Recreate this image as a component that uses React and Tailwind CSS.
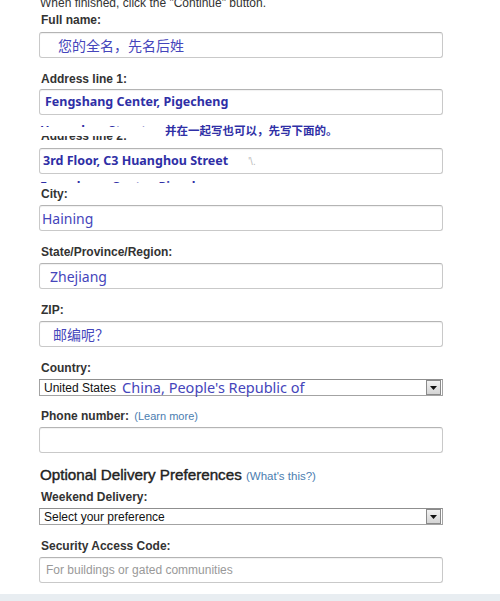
import React from "react";

const label = "block pl-[2px] text-[12px] leading-[14px] font-bold text-[#333]";
const box =
  "w-full h-[26px] border border-[#c9c9c9] border-t-[#b4b4b4] rounded-[3px] bg-white shadow-[inset_0_1px_1px_rgba(0,0,0,0.06)] flex items-center overflow-hidden";
const hand = "text-[#4545bb] [font-family:'Noto_Sans',sans-serif]";
const handBold = "text-[#2f2fa6] font-bold [font-family:'Noto_Sans',sans-serif]";
const cjk = "text-[#4545bb] [font-family:'Noto_Sans_CJK_SC',sans-serif]";
const link = "text-[#4b7db0] font-normal";

// ? Caja de seleccion con el boton gris de windows
const Select = ({ children }) => (
  <div className="w-full h-[17px] border border-[#a3a3a3] border-t-[#8f8f8f] bg-white flex items-center relative">
    <div className="flex-1 flex items-center pl-[4px] overflow-hidden whitespace-nowrap">{children}</div>
    <div className="w-[15px] h-[15px] border border-[#8a8a8a] bg-gradient-to-b from-[#f2f2f2] to-[#d4d4d4] flex items-center justify-center mr-[1px]">
      <svg width="7" height="4" viewBox="0 0 7 4">
        <path d="M0 0 L7 0 L3.5 4 Z" fill="#111" />
      </svg>
    </div>
  </div>
);

const App = () => {
  return (
    <div className="w-[500px] h-[601px] bg-white overflow-hidden [font-family:'Liberation_Sans',Arial,sans-serif] flex flex-col">
      <div className="pl-[39px] w-[443px]">
        {/* texto de arriba cortado */}
        <div className="h-[11px] overflow-hidden">
          <div className="pl-[1px] text-[12px] leading-[14px] -mt-[4px] text-[#333]">
            When finished, click the "Continue" button.
          </div>
        </div>

        <label className={label + " mt-[2px]"}>Full name:</label>
        <div className={box + " mt-[5px] pl-[18px]"}>
          <span className={cjk + " text-[14px]"}>您的全名，先名后姓</span>
        </div>

        <label className={label + " mt-[14px]"}>Address line 1:</label>
        <div className={box + " mt-[3px] pl-[5px] h-[25px]"}>
          <span className={handBold + " text-[12.5px]"}>Fengshang Center, Pigecheng</span>
        </div>

        {/* pedazo recortado con la nota */}
        <div className="h-[33px] relative overflow-hidden">
          <div className={label + " absolute left-0 top-[14px]"}>Address line 2:</div>
          <div className="absolute left-0 top-0 w-full h-[21px] bg-white" />
          <div className="absolute left-[1px] top-[8px] h-[4px] overflow-hidden">
            <span className={handBold + " text-[12.5px] leading-[16px] block"}>Huanghou Street</span>
          </div>
          <div className="absolute left-[126px] top-[7px] text-[#2f2fa6] font-bold text-[11.5px] leading-[16px] [font-family:'Noto_Sans_CJK_SC',sans-serif]">
            并在一起写也可以，先写下面的。
          </div>
        </div>

        <div className={box + " pl-[3px]"}>
          <span className={handBold + " text-[12.5px]"}>3rd Floor, C3 Huanghou Street</span>
          <span className="ml-[20px] text-[10px] text-[#bbb]">'\.</span>
        </div>

        <div className="h-[13px] relative overflow-hidden">
          <div className="absolute left-[1px] top-[5px] h-[4px] overflow-hidden">
            <span className={handBold + " text-[12.5px] leading-[16px] block"}>Fengshang Center, Pigecheng</span>
          </div>
        </div>

        <label className={label}>City:</label>
        <div className={box + " mt-[4px] pl-[2px]"}>
          <span className={hand + " text-[14px]"}>Haining</span>
        </div>

        <label className={label + " mt-[14px]"}>State/Province/Region:</label>
        <div className={box + " mt-[4px] pl-[10px]"}>
          <span className={hand + " text-[14px]"}>Zhejiang</span>
        </div>

        <label className={label + " mt-[14px]"}>ZIP:</label>
        <div className={box + " mt-[4px] pl-[13px]"}>
          <span className={cjk + " text-[14px]"}>邮编呢？</span>
        </div>

        <label className={label + " mt-[14px]"}>Country:</label>
        <div className="mt-[4px]">
          <Select>
            <span className="text-[12px] text-[#111]">United States</span>
            <span className={hand + " text-[14.5px] ml-[6px] leading-[15px]"}>China, People's Republic of</span>
          </Select>
        </div>

        <label className={label + " mt-[13px]"}>
          Phone number: <span className={link + " text-[11px] ml-[2px]"}>(Learn more)</span>
        </label>
        <div className={box + " mt-[4px]"} />

        <h2 className="mt-[12px] pl-[1px] text-[15.2px] leading-[20px] font-normal text-[#222] [-webkit-text-stroke:0.4px_#222]">
          Optional Delivery Preferences{" "}
          <span className={link + " text-[11.5px] [-webkit-text-stroke:0]"}>(What's this?)</span>
        </h2>

        <label className={label + " mt-[4px]"}>Weekend Delivery:</label>
        <div className="mt-[4px]">
          <Select>
            <span className="text-[12px] text-[#111]">Select your preference</span>
          </Select>
        </div>

        <label className={label + " mt-[14px]"}>Security Access Code:</label>
        <div className={box + " mt-[4px] pl-[6px]"}>
          <span className="text-[12px] text-[#999]">For buildings or gated communities</span>
        </div>
      </div>
      <div className="mt-[11px] w-full h-[8px] bg-[#e8edf1]" />
    </div>
  );
};

export default App;
